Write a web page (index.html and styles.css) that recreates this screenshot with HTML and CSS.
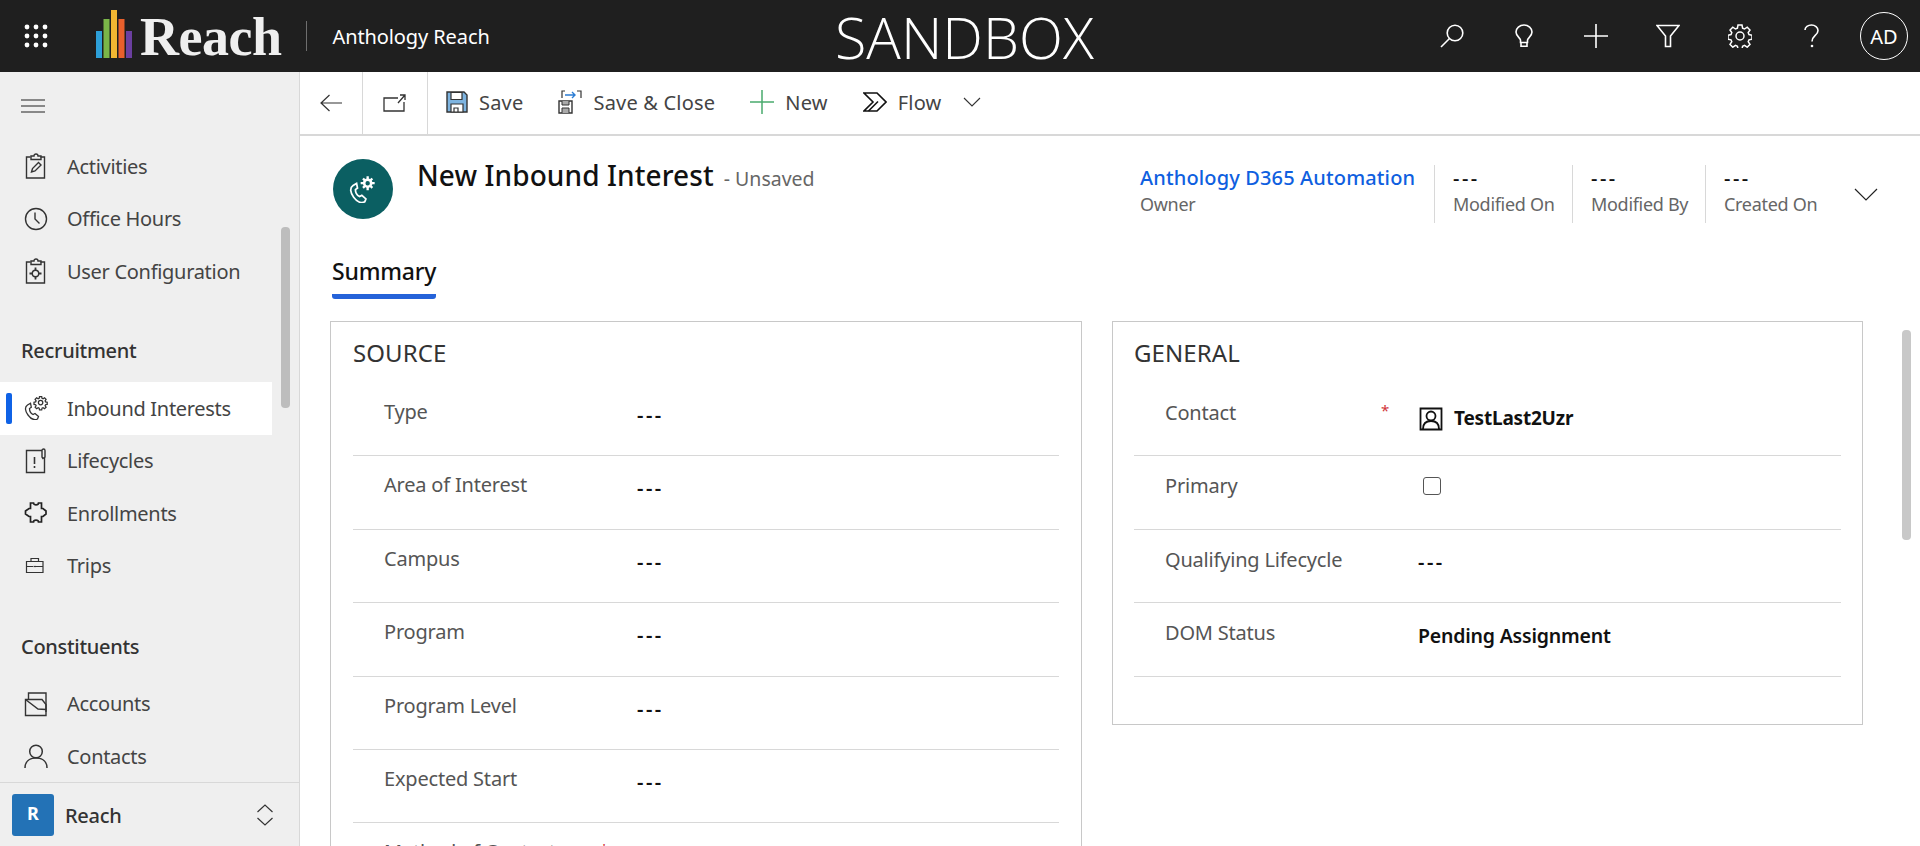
FILE: index.html
```html
<!DOCTYPE html>
<html lang="en">
    <head>
        <meta charset="UTF-8">
        <title>New Inbound Interest</title>
        <link rel="stylesheet" href="styles.css">
    </head>
    <body>
        <header class="topbar">
            <svg class="waffle" width="24" height="24" viewBox="0 0 24 24" fill="#fff">
                <circle cx="3" cy="3" r="2.4"/><circle cx="12" cy="3" r="2.4"/><circle cx="21" cy="3" r="2.4"/>
                <circle cx="3" cy="12" r="2.4"/><circle cx="12" cy="12" r="2.4"/><circle cx="21" cy="12" r="2.4"/>
                <circle cx="3" cy="21" r="2.4"/><circle cx="12" cy="21" r="2.4"/><circle cx="21" cy="21" r="2.4"/>
            </svg>
            <svg class="logo-bars" width="36" height="48" viewBox="0 0 36 48">
                <rect x="0" y="21" width="6" height="27" fill="#2d9fd8"/>
                <rect x="7.5" y="9" width="6" height="39" fill="#7ab648"/>
                <rect x="15" y="0" width="6" height="48" fill="#f2b632"/>
                <rect x="22.500" y="9" width="6" height="39" fill="#e8602c"/>
                <rect x="30" y="21" width="6" height="27" fill="#6b3fa0"/>
            </svg>
            <span class="logo-word">Reach</span>
            <span class="logo-rule"></span>
            <span class="app-name">Anthology Reach</span>
            <span class="env-name">SANDBOX</span>
            <div class="top-actions">
                <svg width="24" height="24" viewBox="0 0 24 24" fill="none" stroke="#fff" stroke-width="1.6"><circle cx="15" cy="9" r="7.8"/><path d="M9.500 14.500 1 23"/></svg>
                <svg width="24" height="24" viewBox="0 0 24 24" fill="none" stroke="#fff" stroke-width="1.6"><path d="M8.500 18.500v-2.500c0-2-4.500-3.500-4.500-8a8 7 0 0 1 16 0c0 4.500-4.500 6-4.500 8v2.500z"/><path d="M9 19v3.200h6V19"/></svg>
                <svg width="24" height="24" viewBox="0 0 24 24" fill="none" stroke="#fff" stroke-width="1.6"><path d="M12 0v24M0 12h24"/></svg>
                <svg width="24" height="24" viewBox="0 0 24 24" fill="none" stroke="#fff" stroke-width="1.6"><path d="M1 1.500h22L14.500 12v10.500h-5V12z"/></svg>
                <svg width="24" height="24" viewBox="0 0 24 24" fill="none" stroke="#fff" stroke-width="1.5"><circle cx="12" cy="12" r="4"/><path d="M10 1h4l.6 3.200 1.900.8 2.700-1.800 2.800 2.800-1.800 2.700.8 1.900 3 .6v4l-3 .6-.8 1.900 1.800 2.700-2.800 2.800-2.700-1.800-1.900.8-.6 3h-4l-.6-3-1.900-.8-2.700 1.800-2.800-2.800 1.800-2.700-.8-1.900-3-.6v-4l3-.6.8-1.900-1.800-2.700 2.800-2.800 2.700 1.800 1.900-.8z"/></svg>
                <svg width="24" height="24" viewBox="0 0 24 24" fill="none" stroke="#fff" stroke-width="1.6"><path d="M5 6c0-3 3-5 6.500-5S18 3.500 18 6.500c0 5-6 5-6 11"/><circle cx="12" cy="22" r="1.300" fill="#fff" stroke="none"/></svg>
                <span class="avatar">AD</span>
            </div>
        </header>

        <div class="shell">
            <nav class="sidebar">
                <div class="burger"><svg width="24" height="14" viewBox="0 0 24 14" stroke="#222" stroke-width="1.200"><path d="M0 1h24M0 7h24M0 13h24"/></svg></div>
                <div class="nav-scroll">
                    <ul class="nav-list">
                        <li class="nav-item">
                            <svg width="24" height="26" viewBox="0 0 24 26" fill="none" stroke="#333" stroke-width="1.400"><path d="M6.500 4H2.500v21h18V4h-4"/><path d="M7 6.500V3h3a2 2 0 0 1 4 0h3v3.500z"/><path d="M7.500 19l1-3.500 6-6 2.500 2.500-6 6z"/></svg>
                            <span>Activities</span>
                        </li>
                        <li class="nav-item">
                            <svg width="24" height="24" viewBox="0 0 24 24" fill="none" stroke="#333" stroke-width="1.400"><circle cx="12" cy="12" r="10.500"/><path d="M11 5.500V12l4.500 4.500"/></svg>
                            <span>Office Hours</span>
                        </li>
                        <li class="nav-item">
                            <svg width="24" height="26" viewBox="0 0 24 26" fill="none" stroke="#333" stroke-width="1.400"><path d="M6.500 4H2.500v21h18V4h-4"/><path d="M7 6.500V3h3a2 2 0 0 1 4 0h3v3.500z"/><circle cx="11.500" cy="15.500" r="3.200"/><path d="M11.500 9.500v2.500M11.500 19v2.500M5.500 15.500H8M15 15.500h2.500" stroke-width="1.800"/></svg>
                            <span>User Configuration</span>
                        </li>
                    </ul>
                    <h3 class="nav-heading">Recruitment</h3>
                    <ul class="nav-list">
                        <li class="nav-item nav-active">
                            <svg width="24" height="24" viewBox="0 0 24 24" fill="none" stroke="#333" stroke-width="1.300"><path d="M3.500 9c-3 2-2.500 6 .5 10s6.500 5.500 9.500 4l1-2.500-3.500-3-2 1c-2-1-3.500-3.500-3.500-6l1.800-1.300-.8-4z"/><g transform="translate(10 0) scale(.55)" stroke-width="2.300"><circle cx="12" cy="12" r="4"/><path d="M10 1h4l.6 3.200 1.900.8 2.700-1.800 2.800 2.800-1.800 2.700.8 1.900 3 .6v4l-3 .6-.8 1.900 1.800 2.700-2.800 2.800-2.700-1.800-1.900.8-.6 3h-4l-.6-3-1.900-.8-2.700 1.800-2.800-2.800 1.800-2.700-.8-1.900-3-.6v-4l3-.6.8-1.900-1.800-2.700 2.800-2.800 2.700 1.800 1.900-.8z"/></g></svg>
                            <span>Inbound Interests</span>
                        </li>
                        <li class="nav-item">
                            <svg width="24" height="26" viewBox="0 0 24 26" fill="none" stroke="#333" stroke-width="1.400"><path d="M18 2.500H2.500v22h18V9"/><path d="M19 10.500 18 9V2.500a1.500 1.500 0 0 1 3 0V9z"/><path d="M10.500 9v7M10.500 18v2" stroke-width="1.600"/></svg>
                            <span>Lifecycles</span>
                        </li>
                        <li class="nav-item">
                            <svg width="24" height="24" viewBox="0 0 24 24" fill="none" stroke="#222" stroke-width="1.700"><path d="M6.500 2h3c0 2.500 5 2.500 5 0h3v5.500h1.500l3 2.500v3l-3 2.500h-1.500V21h-3c0-2.500-5-2.500-5 0h-3v-5.500H5l-3.500-2.500v-3L5 7.500h1.500z"/></svg>
                            <span>Enrollments</span>
                        </li>
                        <li class="nav-item">
                            <svg width="24" height="18" viewBox="0 0 24 18" fill="none" stroke="#333" stroke-width="1.200"><path d="M2.500 4.500h16.500v11H2.500zM2.500 9.500h6.500M12 9.500h7M7 4.500V1.500h7.500v3"/><path d="M9.500 9.500h2.500"/></svg>
                            <span>Trips</span>
                        </li>
                    </ul>
                    <h3 class="nav-heading nav-heading-second">Constituents</h3>
                    <ul class="nav-list">
                        <li class="nav-item">
                            <svg width="24" height="26" viewBox="0 0 24 26" fill="none" stroke="#333" stroke-width="1.400"><path d="M1.500 24.500V8.500h16.500l4 5v11z"/><path d="M4.500 8V2h17.500v19"/><path d="M1.500 8.500 14 18l8 .5"/></svg>
                            <span>Accounts</span>
                        </li>
                        <li class="nav-item">
                            <svg width="24" height="24" viewBox="0 0 24 24" fill="none" stroke="#333" stroke-width="1.500"><circle cx="12" cy="7.500" r="6.300"/><path d="M1 24c0-6 4-10 11-10s11 4 11 10"/></svg>
                            <span>Contacts</span>
                        </li>
                    </ul>
                    <div class="nav-thumb"></div>
                </div>
                <div class="area-switch">
                    <span class="area-tile">R</span>
                    <span class="area-name">Reach</span>
                    <svg width="18" height="22" viewBox="0 0 18 22" fill="none" stroke="#333" stroke-width="1.200"><path d="M1.500 8 9 1l7.500 7M1.500 14 9 21l7.500-7"/></svg>
                </div>
            </nav>

            <main class="content">
                <div class="toolbar">
                    <div class="tool-cell">
                        <svg width="22" height="18" viewBox="0 0 22 18" fill="none" stroke="#333" stroke-width="1.200"><path d="M9.500 1 1 9l8.500 8M1 9h21"/></svg>
                    </div>
                    <div class="tool-cell tool-cell-second">
                        <svg width="24" height="18" viewBox="0 0 24 18" fill="none" stroke="#333" stroke-width="1.300"><path d="M15 4H1v13h20v-9"/><path d="M15 9l7-8M17 1h5v5"/></svg>
                    </div>
                    <button class="tool-btn tool-btn-first">
                        <svg width="22" height="22" viewBox="0 0 22 22"><path d="M1 1h17l3 3v17H1z" fill="#7eb4e0" stroke="#333" stroke-width="1.400"/><path d="M5 1.500h11v7H5z" fill="#fff" stroke="#333" stroke-width="1.200"/><path d="M5 21v-8h12v8z" fill="#fff" stroke="#333" stroke-width="1.200"/><path d="M8 21v-4h4v4" fill="none" stroke="#333" stroke-width="1.200"/></svg>
                        <span>Save</span>
                    </button>
                    <button class="tool-btn">
                        <svg width="24" height="24" viewBox="0 0 24 24"><path d="M1 11h13v12H1z" fill="#fff" stroke="#333" stroke-width="1.400"/><path d="M4 11v4h7v-4M4 23v-5h7v5" fill="#aaa" stroke="#333" stroke-width="1"/><path d="M4 8V1h3M19 1h4v7" fill="none" stroke="#333" stroke-width="1.200"/><path d="M7 5h10M14 2l3 3-3 3" fill="none" stroke="#2b7cd3" stroke-width="1.400"/></svg>
                        <span>Save &amp; Close</span>
                    </button>
                    <button class="tool-btn">
                        <svg width="24" height="24" viewBox="0 0 24 24" fill="none" stroke="#4aab6d" stroke-width="1.500"><path d="M12 0v24M0 12h24"/></svg>
                        <span>New</span>
                    </button>
                    <button class="tool-btn">
                        <svg width="24" height="20" viewBox="0 0 24 20" fill="none" stroke="#111" stroke-width="1.600"><path d="M1 1h13l9 9-9 9H1l9-9z"/><path d="M5.500 19 15 9.500"/></svg>
                        <span>Flow</span>
                        <svg class="tool-caret" width="18" height="10" viewBox="0 0 18 10" fill="none" stroke="#333" stroke-width="1.100"><path d="M1 1l8 8 8-8"/></svg>
                    </button>
                </div>

                <div class="form-head">
                    <span class="entity-icon">
                        <svg width="28" height="28" viewBox="0 0 24 24" fill="none" stroke="#fff" stroke-width="1.500"><path d="M3.500 9c-3 2-2.500 6 .5 10s6.500 5.500 9.500 4l1-2.500-3.500-3-2 1c-2-1-3.500-3.500-3.500-6l1.800-1.300-.8-4z"/><path d="M16 1v3M16 10v3M10 7h3M19 7h3M12 3l2 2M18 9l2 2M20 3l-2 2M14 9l-2 2" stroke-width="2"/><circle cx="16" cy="7" r="3" stroke-width="2.200"/></svg>
                    </span>
                    <div class="title-block">
                        <h1 class="form-title">New Inbound Interest</h1>
                        <span class="form-state">- Unsaved</span>
                    </div>
                    <div class="head-fields">
                        <div class="head-field head-owner">
                            <a class="owner-link">Anthology D365 Automation</a>
                            <span class="head-label">Owner</span>
                        </div>
                        <div class="head-field head-modified-on">
                            <span class="head-value">---</span>
                            <span class="head-label">Modified On</span>
                        </div>
                        <div class="head-field head-modified-by">
                            <span class="head-value">---</span>
                            <span class="head-label">Modified By</span>
                        </div>
                        <div class="head-field head-created">
                            <span class="head-value">---</span>
                            <span class="head-label">Created On</span>
                        </div>
                        <svg class="head-caret" width="24" height="13" viewBox="0 0 24 13" fill="none" stroke="#222" stroke-width="1.200"><path d="M1 1l11 11L23 1"/></svg>
                    </div>
                </div>

                <div class="tabs">
                    <span class="tab-active">Summary</span>
                </div>

                <div class="sections">
                    <section class="panel panel-source">
                        <h2 class="panel-title">SOURCE</h2>
                        <div class="field"><span class="field-label">Type</span><span class="field-value field-empty">---</span></div>
                        <div class="field"><span class="field-label">Area of Interest</span><span class="field-value field-empty">---</span></div>
                        <div class="field"><span class="field-label">Campus</span><span class="field-value field-empty">---</span></div>
                        <div class="field"><span class="field-label">Program</span><span class="field-value field-empty">---</span></div>
                        <div class="field"><span class="field-label">Program Level</span><span class="field-value field-empty">---</span></div>
                        <div class="field"><span class="field-label">Expected Start</span><span class="field-value field-empty">---</span></div>
                        <div class="field field-clipped"><span class="field-label">Method of Contact</span><span class="field-required">*</span></div>
                    </section>
                    <section class="panel panel-general">
                        <h2 class="panel-title">GENERAL</h2>
                        <div class="field">
                            <span class="field-label">Contact</span>
                            <span class="field-required">*</span>
                            <span class="field-value field-lookup">
                                <svg width="24" height="24" viewBox="0 0 24 24" fill="none" stroke="#111" stroke-width="1.800"><path d="M1.500 1.500h21v21h-21z"/><circle cx="12" cy="9" r="4.500"/><path d="M4 22c0-5 3-8 8-8s8 3 8 8"/></svg>
                                TestLast2Uzr
                            </span>
                        </div>
                        <div class="field">
                            <span class="field-label">Primary</span>
                            <span class="field-check"></span>
                        </div>
                        <div class="field"><span class="field-label">Qualifying Lifecycle</span><span class="field-value field-empty">---</span></div>
                        <div class="field"><span class="field-label">DOM Status</span><span class="field-value field-strong">Pending Assignment</span></div>
                    </section>
                    <div class="page-thumb"></div>
                </div>
            </main>
        </div>
    </body>
</html>
```

FILE: styles.css
```css
*
{
    margin: 0;
    padding: 0;
    box-sizing: border-box;
}

html,
body
{
    height: 846px;
    overflow: hidden;
}

body
{
    font-family: "Noto Sans", "Open Sans", sans-serif;
    color: #333;
    background: #fff;
}

ul
{
    list-style: none;
}

button
{
    border: 0;
    background: none;
    font: inherit;
    color: inherit;
}

/* top bar */

.topbar
{
    position: relative;
    display: flex;
    align-items: center;
    height: 72px;
    padding-left: 24px;
    background: #1f1f1f;
    color: #fff;
}

.logo-bars
{
    margin-left: 48px;
    margin-top: -4px;
}

.logo-word
{
    margin: 2px 0 0 8px;
    font-family: "Liberation Serif", serif;
    font-size: 54px;
    font-weight: bold;
    letter-spacing: -0.5px;
    color: #efefef;
}

.logo-rule
{
    width: 1px;
    height: 30px;
    margin-left: 25px;
    background: #6e6e6e;
}

.app-name
{
    margin-left: 25px;
    font-size: 20px;
    letter-spacing: -0.1px;
}

.env-name
{
    position: absolute;
    left: 835px;
    top: 1px;
    font-family: "Open Sans", sans-serif;
    font-size: 57.500px;
    font-weight: 300;
    line-height: 72px;
    color: #fff;
}

.top-actions
{
    display: flex;
    align-items: center;
    gap: 48px;
    margin-left: auto;
    padding-right: 12px;
}

.avatar
{
    display: flex;
    align-items: center;
    justify-content: center;
    width: 48px;
    height: 48px;
    margin-left: -12px;
    border: 1px solid #fff;
    border-radius: 50%;
    font-size: 20px;
}

/* shell */

.shell
{
    display: flex;
    height: 774px;
}

.sidebar
{
    display: flex;
    flex-direction: column;
    flex: 0 0 300px;
    width: 300px;
    border-right: 1px solid #d8d8d8;
    background: #efefef;
}

.burger
{
    flex: 0 0 62px;
    padding: 24px 0 0 21px;
}

.nav-scroll
{
    position: relative;
    flex: 1;
    overflow: hidden;
    padding-top: 6px;
}

.nav-item
{
    display: flex;
    align-items: center;
    gap: 19px;
    width: 272px;
    height: 52.500px;
    padding-left: 24px;
    font-size: 20px;
    letter-spacing: -0.3px;
    color: #444;
}

.nav-item svg
{
    flex: 0 0 24px;
}

.nav-active
{
    position: relative;
    background: #fff;
}

.nav-active::before
{
    content: "";
    position: absolute;
    left: 6px;
    top: 11px;
    width: 6px;
    height: 31px;
    border-radius: 2px;
    background: #0f62e6;
}

.nav-heading
{
    margin: 37px 0 15.500px 21px;
    height: 32px;
    font-size: 20px;
    font-weight: 500;
    letter-spacing: -0.3px;
    line-height: 32px;
    color: #333;
}

.nav-heading-second
{
    margin: 38.500px 0 15px 21px;
}

.nav-thumb
{
    position: absolute;
    left: 281px;
    top: 93px;
    width: 9px;
    height: 181px;
    border-radius: 4px;
    background: #bdbdbd;
}

.area-switch
{
    display: flex;
    align-items: center;
    flex: 0 0 64px;
    padding: 0 25px 0 12px;
    border-top: 1px solid #d8d8d8;
}

.area-tile
{
    display: flex;
    align-items: center;
    justify-content: center;
    width: 42px;
    height: 42px;
    padding-bottom: 4px;
    border-radius: 3px;
    background: #2372b6;
    color: #fff;
    font-size: 18px;
    font-weight: 700;
}

.area-name
{
    flex: 1;
    margin-left: 11px;
    padding-top: 2px;
    font-size: 20px;
    font-weight: 500;
    letter-spacing: -0.3px;
}

/* main */

.content
{
    flex: 1;
    min-width: 0;
    overflow: hidden;
}

.toolbar
{
    display: flex;
    align-items: center;
    height: 64px;
    border-bottom: 2px solid #d8d8d8;
}

.tool-cell
{
    display: flex;
    align-items: center;
    justify-content: center;
    width: 63px;
    height: 62px;
    border-right: 1px solid #d8d8d8;
}

.tool-cell-second
{
    width: 65px;
}

.tool-btn
{
    display: flex;
    align-items: center;
    gap: 11px;
    height: 62px;
    padding: 0 18px 2px 17px;
    font-size: 20px;
    letter-spacing: 0.2px;
    color: #444;
}

.tool-btn-first
{
    margin-left: 1px;
}

.tool-caret
{
    margin-left: 11px;
}

/* form header */

.form-head
{
    display: flex;
    height: 110px;
    padding: 23px 0 0 33px;
}

.entity-icon
{
    display: flex;
    align-items: center;
    justify-content: center;
    width: 60px;
    height: 60px;
    border-radius: 50%;
    background: #0b5f62;
}

.title-block
{
    display: flex;
    align-items: baseline;
    gap: 10px;
    margin: -3px 0 0 24px;
    height: 38px;
}

.form-title
{
    font-size: 28px;
    font-weight: 500;
    letter-spacing: 0.1px;
    color: #111;
}

.form-state
{
    font-size: 19.500px;
    color: #666;
}

.head-fields
{
    display: flex;
    align-items: flex-start;
    margin-left: auto;
}

.head-field
{
    display: flex;
    flex-direction: column;
    height: 58px;
    margin-top: 6px;
    padding-left: 18px;
    border-left: 1px solid #d8d8d8;
    font-size: 18px;
    letter-spacing: -0.3px;
    line-height: 26px;
}

.head-owner
{
    width: 294px;
    padding-left: 0;
    border-left: 0;
}

.head-modified-on
{
    width: 138px;
}

.head-modified-by
{
    width: 133px;
}

.head-created
{
    width: 149px;
}

.owner-link
{
    font-size: 20px;
    font-weight: 500;
    letter-spacing: 0.14px;
    color: #0f5fe0;
}

.head-value
{
    font-size: 20px;
    font-weight: 500;
    letter-spacing: 2.5px;
    color: #111;
}

.head-label
{
    color: #666;
}

.head-caret
{
    margin: 29px 42px 0 0;
}

/* tabs */

.tabs
{
    height: 53px;
    margin-bottom: 22px;
    padding-left: 32px;
}

.tab-active
{
    display: inline-block;
    height: 53px;
    padding-top: 12px;
    border-bottom: 5px solid #2563d9;
    border-radius: 0 0 3px 3px;
    font-size: 23px;
    font-weight: 500;
    letter-spacing: -0.2px;
    line-height: 26px;
    color: #111;
}

/* sections */

.sections
{
    position: relative;
    display: flex;
    align-items: flex-start;
    gap: 30px;
    padding: 0 0 0 30px;
}

.panel
{
    width: 752px;
    padding: 0 22px;
    border: 1px solid #c8c8c8;
}

.panel-source
{
    height: 560px;
}

.panel-general
{
    width: 751px;
    height: 404px;
    padding: 0 21px;
}

.panel-title
{
    height: 61px;
    font-size: 24px;
    font-weight: 400;
    letter-spacing: 0.1px;
    line-height: 61px;
    color: #333;
}

.field
{
    display: flex;
    height: 73.400px;
    padding: 0 0 0 31px;
    border-bottom: 1px solid #d8d8d8;
    font-size: 20px;
    letter-spacing: -0.2px;
}

.field-label
{
    flex: 0 0 253px;
    padding-top: 15px;
    color: #555;
}

.panel-general .field-label
{
    padding-top: 16px;
}

.field-value
{
    padding-top: 18px;
    font-weight: 600;
    color: #111;
}

.field-empty
{
    letter-spacing: 2.5px;
}

.field-strong
{
    padding-top: 19px;
    font-size: 19.500px;
}

.field-lookup
{
    display: flex;
    align-items: flex-start;
    gap: 11px;
    padding-top: 22px;
    font-size: 19px;
    font-weight: 700;
}

.field-lookup svg
{
    margin-top: 2px;
}

.field-required
{
    width: 38px;
    margin: 17px 0 0 -37px;
    color: #d13438;
    font-size: 15px;
}

.field-clipped .field-required
{
    margin-top: 16px;
}

.field-check
{
    width: 18px;
    height: 18px;
    margin: 21px 0 0 5px;
    border: 1px solid #555;
    border-radius: 3px;
}

.page-thumb
{
    position: absolute;
    left: 1602px;
    top: 9px;
    width: 9px;
    height: 210px;
    border-radius: 4px;
    background: #c8c8c8;
}
```
